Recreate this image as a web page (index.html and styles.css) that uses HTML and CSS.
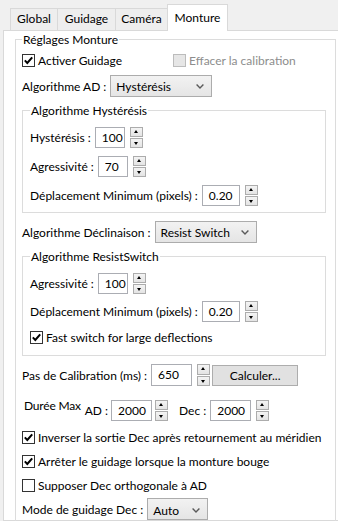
FILE: index.html
```html
<!DOCTYPE html>
<html lang="fr">
<head>
    <meta charset="UTF-8">
    <meta name="viewport" content="width=device-width, initial-scale=1.0">
    <title>Monture</title>
    <link rel="stylesheet" href="styles.css">
</head>
<body>
    <div class="tabs">
        <div class="tab t-global">Global</div>
        <div class="tab t-guidage">Guidage</div>
        <div class="tab t-camera">Caméra</div>
        <div class="tab t-monture active">Monture</div>
    </div>

    <div class="page">
        <fieldset class="group main">
            <legend>Réglages Monture</legend>

            <div class="row r-first">
                <label class="check first-col"><span class="box"><svg width="11" height="11" viewBox="0 0 11 11"><path d="M1.8 5.4 L4.3 8 L9.2 2.3" /></svg></span>Activer Guidage</label>
                <label class="check disabled"><span class="box"></span>Effacer la calibration</label>
            </div>

            <div class="row r-select">
                <span class="lbl">Algorithme AD :</span>
                <span class="select sel-wide">Hystérésis<svg class="chev" width="8" height="5" viewBox="0 0 8 5"><polyline points="0.6,0.6 4,4 7.4,0.6" /></svg></span>
            </div>

            <fieldset class="group sub">
                <legend>Algorithme Hystérésis</legend>
                <div class="row r-spin">
                    <span class="lbl">Hystérésis :</span>
                    <span class="value num-s">100</span>
                    <span class="arrows"><span class="up"></span><span class="down"></span></span>
                </div>
                <div class="row r-spin">
                    <span class="lbl">Agressivité :</span>
                    <span class="value num-s">70</span>
                    <span class="arrows"><span class="up"></span><span class="down"></span></span>
                </div>
                <div class="row r-spin">
                    <span class="lbl">Déplacement Minimum (pixels) :</span>
                    <span class="value num-m">0.20</span>
                    <span class="arrows"><span class="up"></span><span class="down"></span></span>
                </div>
            </fieldset>

            <div class="row r-decl">
                <span class="lbl">Algorithme Déclinaison :</span>
                <span class="select sel-wide">Resist Switch<svg class="chev" width="8" height="5" viewBox="0 0 8 5"><polyline points="0.6,0.6 4,4 7.4,0.6" /></svg></span>
            </div>

            <fieldset class="group sub second">
                <legend>Algorithme ResistSwitch</legend>
                <div class="row r-spin">
                    <span class="lbl">Agressivité :</span>
                    <span class="value num-s">100</span>
                    <span class="arrows"><span class="up"></span><span class="down"></span></span>
                </div>
                <div class="row r-spin r-close">
                    <span class="lbl">Déplacement Minimum (pixels) :</span>
                    <span class="value num-m">0.20</span>
                    <span class="arrows"><span class="up"></span><span class="down"></span></span>
                </div>
                <div class="row r-check">
                    <label class="check"><span class="box"><svg width="11" height="11" viewBox="0 0 11 11"><path d="M1.8 5.4 L4.3 8 L9.2 2.3" /></svg></span>Fast switch for large deflections</label>
                </div>
            </fieldset>

            <div class="row r-calib">
                <span class="lbl">Pas de Calibration (ms) :</span>
                <span class="value num-l tall">650</span>
                <span class="arrows tall"><span class="up"></span><span class="down"></span></span>
                <span class="button">Calculer...</span>
            </div>

            <div class="row r-duree">
                <span class="lbl duree">Durée Max</span>
                <span class="lbl ad">AD :</span>
                <span class="value num-l">2000</span>
                <span class="arrows near"><span class="up"></span><span class="down"></span></span>
                <span class="lbl dec">Dec :</span>
                <span class="value num-l">2000</span>
                <span class="arrows"><span class="up"></span><span class="down"></span></span>
            </div>

            <div class="row r-opt">
                <label class="check"><span class="box"><svg width="11" height="11" viewBox="0 0 11 11"><path d="M1.8 5.4 L4.3 8 L9.2 2.3" /></svg></span>Inverser la sortie Dec après retournement au méridien</label>
            </div>
            <div class="row r-opt">
                <label class="check"><span class="box"><svg width="11" height="11" viewBox="0 0 11 11"><path d="M1.8 5.4 L4.3 8 L9.2 2.3" /></svg></span>Arrêter le guidage lorsque la monture bouge</label>
            </div>
            <div class="row r-opt">
                <label class="check"><span class="box"></span>Supposer Dec orthogonale à AD</label>
            </div>

            <div class="row r-mode">
                <span class="lbl">Mode de guidage Dec :</span>
                <span class="select sel-small">Auto<svg class="chev" width="8" height="5" viewBox="0 0 8 5"><polyline points="0.6,0.6 4,4 7.4,0.6" /></svg></span>
            </div>
        </fieldset>
    </div>
</body>
</html>
```

FILE: styles.css
```css
* {
    box-sizing: border-box;
}
body {
    margin: 0;
    width: 338px;
    height: 521px;
    overflow: hidden;
    background-color: #f0f0f0;
    font-family: Lato, "Liberation Sans", sans-serif;
    font-size: 12px;
    color: #000;
}

/* onglets */
.tabs {
    display: flex;
    align-items: flex-end;
    height: 30px;
    padding-left: 10px;
    position: relative;
    z-index: 1;
}
.tab {
    height: 22px;
    line-height: 19px;
    margin-right: -1px;
    border: 1px solid #d9d9d9;
    border-bottom: none;
    background-color: #eeeeee;
    text-align: center;
}
.tab.active {
    height: 27px;
    margin-bottom: -1px;
    padding-top: 3px;
    background-color: #fff;
}
.t-global { width: 48px; }
.t-guidage { width: 59px; }
.t-camera { width: 53px; }
.t-monture { width: 61px; }

.page {
    width: 345px;
    height: 491px;
    margin-left: 3px;
    border: 1px solid #d9d9d9;
    background-color: #fff;
    padding-top: 1px;
}

/* boites de groupe */
.group {
    margin: 0;
    border: 1px solid #dcdcdc;
    min-width: 0;
}
.group legend {
    padding: 0 1px;
    line-height: 15px;
}
.main {
    width: 321px;
    margin-left: 11px;
    padding: 0 9px 0 6px;
    height: 500px;
}
.sub {
    margin-top: 6px;
    padding: 0 6px 6px 7px;
}
.sub.second {
    padding-bottom: 10px;
}

/* lignes */
.row {
    display: flex;
    align-items: center;
}
.r-first { margin-top: 5px; height: 16px; }
.r-select { margin-top: 7px; }
.r-spin { margin-top: 8px; }
.r-spin:first-of-type { margin-top: 9px; }
.r-close { margin-top: 7px; }
.r-check { margin-top: 7px; height: 16px; }
.r-decl { margin-top: 8px; }
.r-calib { margin-top: 8px; }
.r-duree { margin-top: 14px; }
.r-opt { margin-top: 8px; height: 16px; }
.r-mode { margin-top: 5px; }

.lbl {
    margin-right: 4px;
    white-space: nowrap;
}
.duree {
    margin-left: 2px;
    margin-right: 4px;
    letter-spacing: -0.2px;
    align-self: flex-start;
    margin-top: -2px;
}
.ad {
    margin-right: 3px;
}
.dec {
    margin-left: 11px;
}

/* cases a cocher */
.check {
    display: flex;
    align-items: center;
    white-space: nowrap;
}
.first-col {
    width: 151px;
}
.box {
    display: inline-flex;
    align-items: center;
    justify-content: center;
    width: 13px;
    height: 13px;
    margin-right: 3px;
    border: 1px solid #333;
    background-color: #fff;
}
.box path {
    fill: none;
    stroke: #000;
    stroke-width: 2;
}
.check.disabled {
    color: #8d8d8d;
}
.check.disabled .box {
    border-color: #bcbcbc;
    background-color: #e6e6e6;
}

/* listes deroulantes */
.select {
    display: flex;
    align-items: center;
    justify-content: space-between;
    height: 22px;
    padding: 0 7px 0 5px;
    border: 1px solid #acacac;
    background: linear-gradient(#f2f2f2, #e5e5e5);
}
.sel-wide { width: 102px; }
.sel-small {
    width: 61px;
    padding-top: 3px;
}
.chev polyline {
    fill: none;
    stroke: #5a5a5a;
    stroke-width: 1.4;
}

/* champs numeriques */
.value {
    height: 21px;
    line-height: 19px;
    padding-left: 6px;
    border: 1px solid #abadb3;
    background-color: #fff;
}
.value.tall { height: 22px; line-height: 20px; }
.num-s { width: 30px; }
.num-m { width: 38px; }
.num-l { width: 41px; }

.arrows {
    display: flex;
    flex-direction: column;
    gap: 1px;
    margin-left: 5px;
}
.arrows.near { margin-left: 3px; }
.up, .down {
    position: relative;
    width: 13px;
    height: 10px;
    border: 1px solid #acacac;
    background: linear-gradient(#f4f4f4, #e4e4e4);
}
.arrows.tall .up, .arrows.tall .down { height: 10.5px; }
.up::after, .down::after {
    content: "";
    position: absolute;
    left: 3px;
    top: 2px;
    border-left: 2.5px solid transparent;
    border-right: 2.5px solid transparent;
}
.up::after { border-bottom: 3px solid #000; }
.down::after { border-top: 3px solid #000; top: 3px; }

.button {
    width: 86px;
    height: 21px;
    margin-left: 2px;
    line-height: 19px;
    text-align: center;
    border: 1px solid #adadad;
    background-color: #e1e1e1;
}
```
